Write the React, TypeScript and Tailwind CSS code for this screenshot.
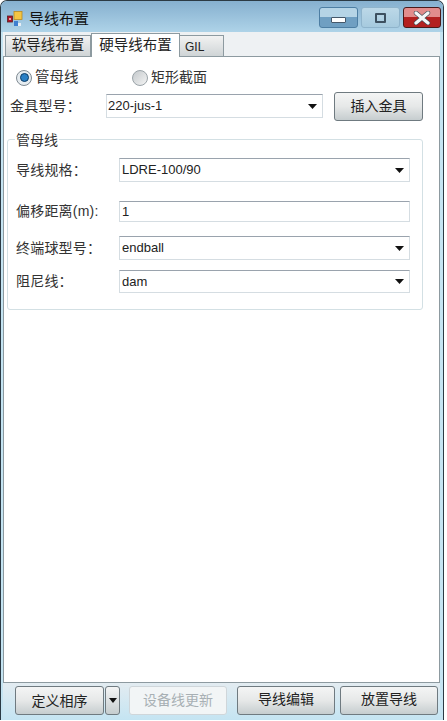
const font = "font-['Liberation_Sans','Noto_Sans_CJK_SC',sans-serif]";

function Arrow() {
  return (
    <svg width="9" height="5" viewBox="0 0 9 5" className="shrink-0">
      <path d="M0 0H9L4.5 5Z" fill="#111" />
    </svg>
  );
}

function Combo({ value, className }: { value: string; className: string }) {
  return (
    <div
      className={`flex items-center justify-between border border-[#d5dde2] border-t-[#9aa3ad] bg-white pr-[5px] text-[13px] text-[#222] ${className}`}
    >
      <span>{value}</span>
      <Arrow />
    </div>
  );
}

function Row({
  label,
  className,
  children,
}: {
  label: string;
  className: string;
  children: React.ReactNode;
}) {
  return (
    <div className={`flex items-center ${className}`}>
      <span className="w-[111px] pl-[8px] text-[14px] tracking-[0.2px] text-[#333]">
        {label}
      </span>
      {children}
    </div>
  );
}

function Button({
  label,
  className,
  disabled,
}: {
  label: string;
  className: string;
  disabled?: boolean;
}) {
  return (
    <div
      className={`flex items-center justify-center rounded-[3px] border text-[14px] ${
        disabled
          ? "border-[#cfd6da] bg-[#f2f5f6] text-[#a8b0b4]"
          : "border-[#6f7a80] bg-gradient-to-b from-[#f4f5f5] via-[#e6e8e8] to-[#c6cdcf] text-[#222]"
      } ${className}`}
    >
      {label}
    </div>
  );
}

function WindowIcon() {
  return (
    <svg width="16" height="16" viewBox="0 0 16 16" className="ml-[6px]">
      <rect x="0.5" y="5" width="5" height="6" fill="#b0122a" stroke="#5a2020" strokeWidth="0.8" />
      <rect x="2" y="7" width="2" height="2" fill="#e8b0a0" />
      <rect x="7" y="0.5" width="8" height="8" fill="#f4c543" stroke="#b98a20" strokeWidth="0.8" />
      <rect x="7" y="10" width="4" height="5" fill="#3d7fd0" />
      <rect x="11" y="12" width="3" height="3" fill="#e8eef6" />
    </svg>
  );
}

export default function App() {
  return (
    <div className={`h-[721px] w-[447px] bg-white ${font}`}>
      <div className="flex h-[720px] w-[444px] flex-col rounded-t-[7px] border border-b-0 border-[#2b3a44] bg-[#c4e4f2]">
        {/* title bar */}
        <div className="flex h-[31px] shrink-0 items-start rounded-t-[6px] bg-gradient-to-b from-[#86b0cf] to-[#aed3e8]">
          <div className="flex items-center pt-[9px]">
            <WindowIcon />
            <span className="ml-[6px] text-[15px] leading-[18px] text-[#111]">导线布置</span>
          </div>
          <div className="mt-[6px] mr-[2px] ml-auto flex gap-[3px]">
            <div className="flex h-[21px] w-[39px] items-end justify-center rounded-[3px] border border-[#4d7ea3] bg-gradient-to-b from-[#b5d4e6] from-50% to-[#6f9fc2] to-50% pb-[4px]">
              <div className="h-[6px] w-[15px] rounded-[1px] border border-[#45586a] bg-white" />
            </div>
            <div className="flex h-[21px] w-[39px] items-center justify-center rounded-[3px] border border-[#8fb4cc] bg-gradient-to-b from-[#bcd8e8] to-[#a6cade]">
              <div className="flex h-[10px] w-[11px] items-center justify-center rounded-[1px] border-2 border-[#3d5060]">
                <div className="h-[3px] w-[3px] bg-[#b5d4e6]" />
              </div>
            </div>
            <div className="flex h-[21px] w-[38px] items-center justify-center rounded-[3px] border border-[#4a1a1a] bg-gradient-to-b from-[#e28c8c] from-50% to-[#b32020] to-50%">
              <svg width="18" height="14" viewBox="0 0 18 14">
                <path d="M3 2L15 12M15 2L3 12" stroke="#3d4a55" strokeWidth="4.4" strokeLinecap="round" />
                <path d="M3 2L15 12M15 2L3 12" stroke="#f4f6f8" strokeWidth="3.2" strokeLinecap="round" />
              </svg>
            </div>
          </div>
        </div>
        {/* tab strip */}
        <div className="mr-[3px] ml-[2px] flex grow flex-col bg-[#eef1f3] pt-[2px]">
          <div className="relative z-10 flex h-[22px] shrink-0 items-end pl-[2px]">
            <div className="flex h-[21px] w-[86px] items-center justify-center border border-b-0 border-[#8d9aa0] bg-gradient-to-b from-[#f2f2f2] to-[#cfd4d6] text-[14.5px] text-[#222]">
              软导线布置
            </div>
            <div className="mb-[-1px] flex h-[24px] w-[89px] items-start justify-center border border-b-0 border-[#8d9aa0] bg-white pt-[1px] text-[14.5px] text-[#222]">
              硬导线布置
            </div>
            <div className="flex h-[21px] w-[44px] items-center border border-b-0 border-l-0 border-[#8d9aa0] bg-gradient-to-b from-[#f2f2f2] to-[#cfd4d6] pt-[1px] pl-[5px] text-[12px] text-[#222]">
              GIL
            </div>
          </div>
          {/* tab page */}
          <div className="flex h-[627px] shrink-0 flex-col border border-[#8d9aa0] bg-white">
            <div className="flex h-[34px] items-center pt-[7px] pl-[12px] text-[14.5px] text-[#333]">
              <span className="flex h-[16px] w-[16px] items-center justify-center rounded-full border border-[#7f8a92] bg-[#e6ecf0]">
                <span className="h-[9px] w-[9px] rounded-full border border-[#0c3c66] bg-[#2a7fc4]" />
              </span>
              <span className="ml-[3px] w-[97px]">管母线</span>
              <span className="h-[16px] w-[16px] rounded-full border border-[#9aa3a8] bg-gradient-to-br from-[#c4c9cc] to-[#f4f4f4]" />
              <span className="ml-[3px] text-[14px]">矩形截面</span>
            </div>
            <div className="flex h-[30px] items-center pr-[15px] pl-[6px]">
              <span className="w-[96px] text-[14px] tracking-[0.2px] text-[#333]">金具型号：</span>
              <Combo value="220-jus-1" className="h-[24px] w-[217px] border-[#8fc4de] border-t-[#8fc4de] pl-[1px] text-[#111]" />
              <Button label="插入金具" className="ml-[11px] h-[29px] w-[89px]" />
            </div>
            {/* group box */}
            <div className="relative mt-[18px] ml-[3px] flex h-[171px] w-[416px] flex-col rounded-[3px] border border-[#d3e0e4] pt-[18px]">
              <span className="absolute top-[-8px] left-[7px] bg-white px-[1px] text-[14px] leading-[16px] text-[#333]">
                管母线
              </span>
              <Row label="导线规格：" className="">
                <Combo value="LDRE-100/90" className="h-[24px] w-[291px] pl-[2px]" />
              </Row>
              <Row label="偏移距离(m):" className="mt-[19px]">
                <div className="flex h-[21px] w-[291px] items-center border border-[#d5dde2] border-t-[#9aa3ad] pl-[2px] text-[13px] text-[#222]">
                  1
                </div>
              </Row>
              <Row label="终端球型号：" className="mt-[14px]">
                <Combo value="endball" className="h-[24px] w-[291px] pl-[2px]" />
              </Row>
              <Row label="阻尼线：" className="mt-[10px]">
                <Combo value="dam" className="h-[23px] w-[291px] pl-[2px]" />
              </Row>
            </div>
          </div>
          {/* bottom bar */}
          <div className="flex grow items-start bg-gradient-to-b from-[#e3ecf1] to-[#c4e4f2] pt-[3px] pl-[12px]">
            <Button label="定义相序" className="h-[29px] w-[89px] pt-[2px]" />
            <div className="ml-[1px] flex h-[29px] w-[15px] items-center justify-center rounded-[3px] border border-[#6f7a80] bg-gradient-to-b from-[#f4f5f5] to-[#c6cdcf]">
              <svg width="8" height="5" viewBox="0 0 8 5">
                <path d="M0 0H8L4 5Z" fill="#111" />
              </svg>
            </div>
            <Button label="设备线更新" disabled className="ml-[9px] h-[29px] w-[98px]" />
            <Button label="导线编辑" className="ml-[10px] h-[29px] w-[98px] pb-[2px]" />
            <Button label="放置导线" className="ml-[5px] h-[29px] w-[98px] pb-[2px]" />
          </div>
        </div>
      </div>
    </div>
  );
}
